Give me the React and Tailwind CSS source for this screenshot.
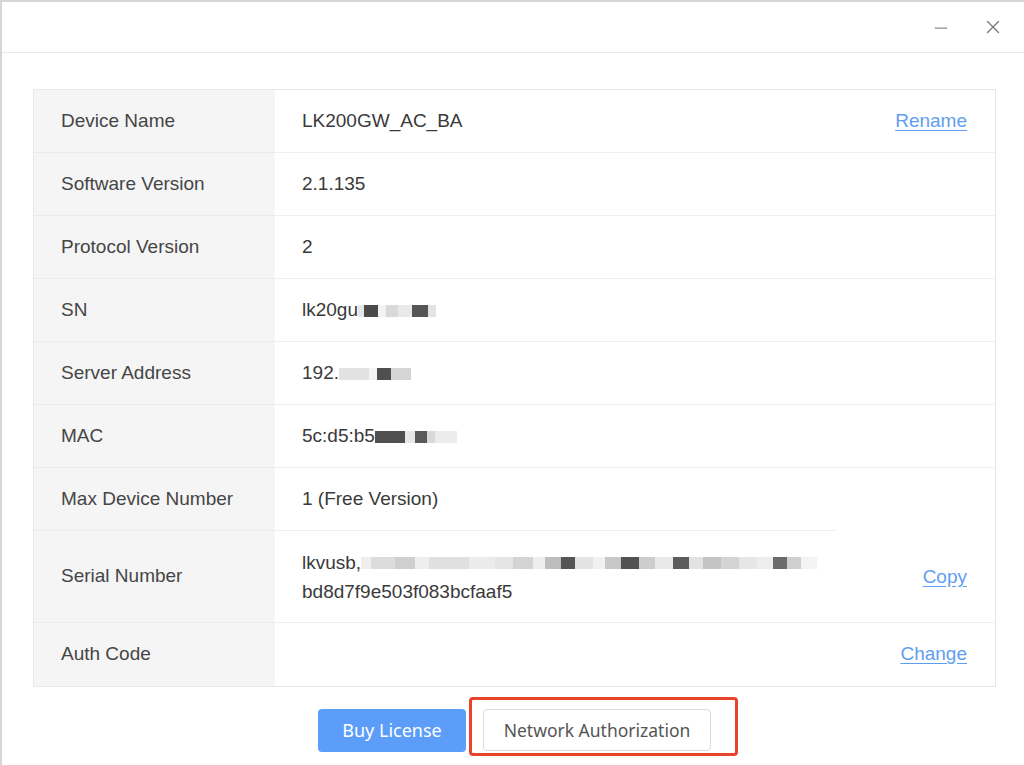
import { Minus, X } from "lucide-react";

const rows = [
  { label: "Device Name", value: "LK200GW_AC_BA", action: "Rename" },
  { label: "Software Version", value: "2.1.135" },
  { label: "Protocol Version", value: "2" },
  {
    label: "SN",
    value: "lk20gu",
    mask: [
      [6, "#e6e6e6"],
      [14, "#4a4a4a"],
      [8, "#f2f2f2"],
      [12, "#d9d9d9"],
      [14, "#e9e9e9"],
      [16, "#555"],
      [8, "#e4e4e4"],
    ],
  },
  {
    label: "Server Address",
    value: "192.",
    mask: [
      [30, "#e2e2e2"],
      [8, "#f4f4f4"],
      [14, "#4f4f4f"],
      [20, "#d5d5d5"],
    ],
  },
  {
    label: "MAC",
    value: "5c:d5:b5",
    mask: [
      [30, "#505050"],
      [10, "#e8e8e8"],
      [12, "#5a5a5a"],
      [8, "#d8d8d8"],
      [22, "#ececec"],
    ],
  },
  { label: "Max Device Number", value: "1 (Free Version)", shortLine: true },
];

// blurred-out chunks of the serial number
const serialMask = [
  [10, "#eeeeee"], [24, "#dcdcdc"], [20, "#cfcfcf"], [14, "#eeeeee"], [40, "#e0e0e0"],
  [26, "#ebebeb"], [18, "#e4e4e4"], [20, "#d4d4d4"], [12, "#eeeeee"], [16, "#bdbdbd"],
  [14, "#555"], [18, "#e3e3e3"], [12, "#f1f1f1"], [16, "#c8c8c8"], [18, "#525252"],
  [16, "#cdcdcd"], [18, "#e9e9e9"], [16, "#5c5c5c"], [14, "#e2e2e2"], [18, "#c4c4c4"],
  [18, "#d4d4d4"], [18, "#e6e6e6"], [16, "#ededed"], [14, "#6b6b6b"], [14, "#cfcfcf"],
  [16, "#f3f3f3"],
];

function Mask({ parts }) {
  return (
    <span className="inline-flex items-center align-middle">
      {parts.map(([w, c], i) => (
        <span key={i} className="inline-block h-[12px]" style={{ width: w, backgroundColor: c }} />
      ))}
    </span>
  );
}

function LinkText({ children }) {
  return <a className="cursor-pointer text-[#5f9ef0] underline underline-offset-[3px]">{children}</a>;
}

function Row({ label, children, action, tall, last, shortLine }) {
  return (
    <div className={`flex ${tall ? "h-[92px]" : "h-[63px]"}`}>
      <div
        className={`flex w-[241px] shrink-0 items-center bg-[#f5f5f5] pl-[27px] text-[#454545] ${
          last ? "" : "border-b border-[#ebebeb]"
        }`}
      >
        {label}
      </div>
      <div className="relative flex flex-1 items-center justify-between pl-[27px] pr-[28px] text-[#3a3a3a]">
        <div>{children}</div>
        {action ? <LinkText>{action}</LinkText> : null}
        {!last ? (
          <div
            className={`absolute bottom-0 left-0 h-px bg-[#efefef] ${shortLine ? "w-[561px]" : "right-0"}`}
          />
        ) : null}
      </div>
    </div>
  );
}

export default function App() {
  return (
    <div
      className="relative h-[765px] w-[1024px] overflow-hidden border-l-2 border-t-2 border-[#d6d6d6] bg-white text-[19px]"
      style={{ fontFamily: '"Liberation Sans", Arial, sans-serif' }}
    >
      <header className="flex h-[51px] items-center justify-end border-b border-[#e9e9e9] pr-[20px]">
        <Minus size={20} strokeWidth={1.5} className="mr-[31px] mt-[1px] text-[#8c8c8c]" />
        <X size={22} strokeWidth={1.5} className="text-[#7a7a7a]" />
      </header>

      <main className="pl-[31px] pr-[28px] pt-[36px]">
        <section className="border border-[#e8e8e8]">
          {rows.map((r) => (
            <Row key={r.label} label={r.label} action={r.action} shortLine={r.shortLine}>
              {r.value}
              {r.mask ? <Mask parts={r.mask} /> : null}
            </Row>
          ))}
          <Row label="Serial Number" action="Copy" tall>
            <div className="leading-[29px]">
              <div className="flex items-center">
                lkvusb,
                <Mask parts={serialMask} />
              </div>
              <div>bd8d7f9e503f083bcfaaf5</div>
            </div>
          </Row>
          <Row label="Auth Code" action="Change" last />
        </section>

        <footer
          className="flex justify-center gap-[17px] pt-[22px] text-[18px]"
          style={{ fontFamily: '"Noto Sans", "Open Sans", sans-serif' }}
        >
          <button type="button" className="h-[43px] w-[148px] rounded-[4px] bg-[#5b9df8] text-white">
            Buy License
          </button>
          <button
            type="button"
            className="relative h-[42px] w-[228px] rounded-[4px] border border-[#dcdcdc] bg-white text-[17.5px] text-[#555]"
          >
            Network Authorization
            <span className="pointer-events-none absolute -bottom-[6px] -left-[15px] -right-[28px] -top-[13px] rounded-[4px] border-[3px] border-[#e8432c]" />
          </button>
        </footer>
      </main>
    </div>
  );
}
